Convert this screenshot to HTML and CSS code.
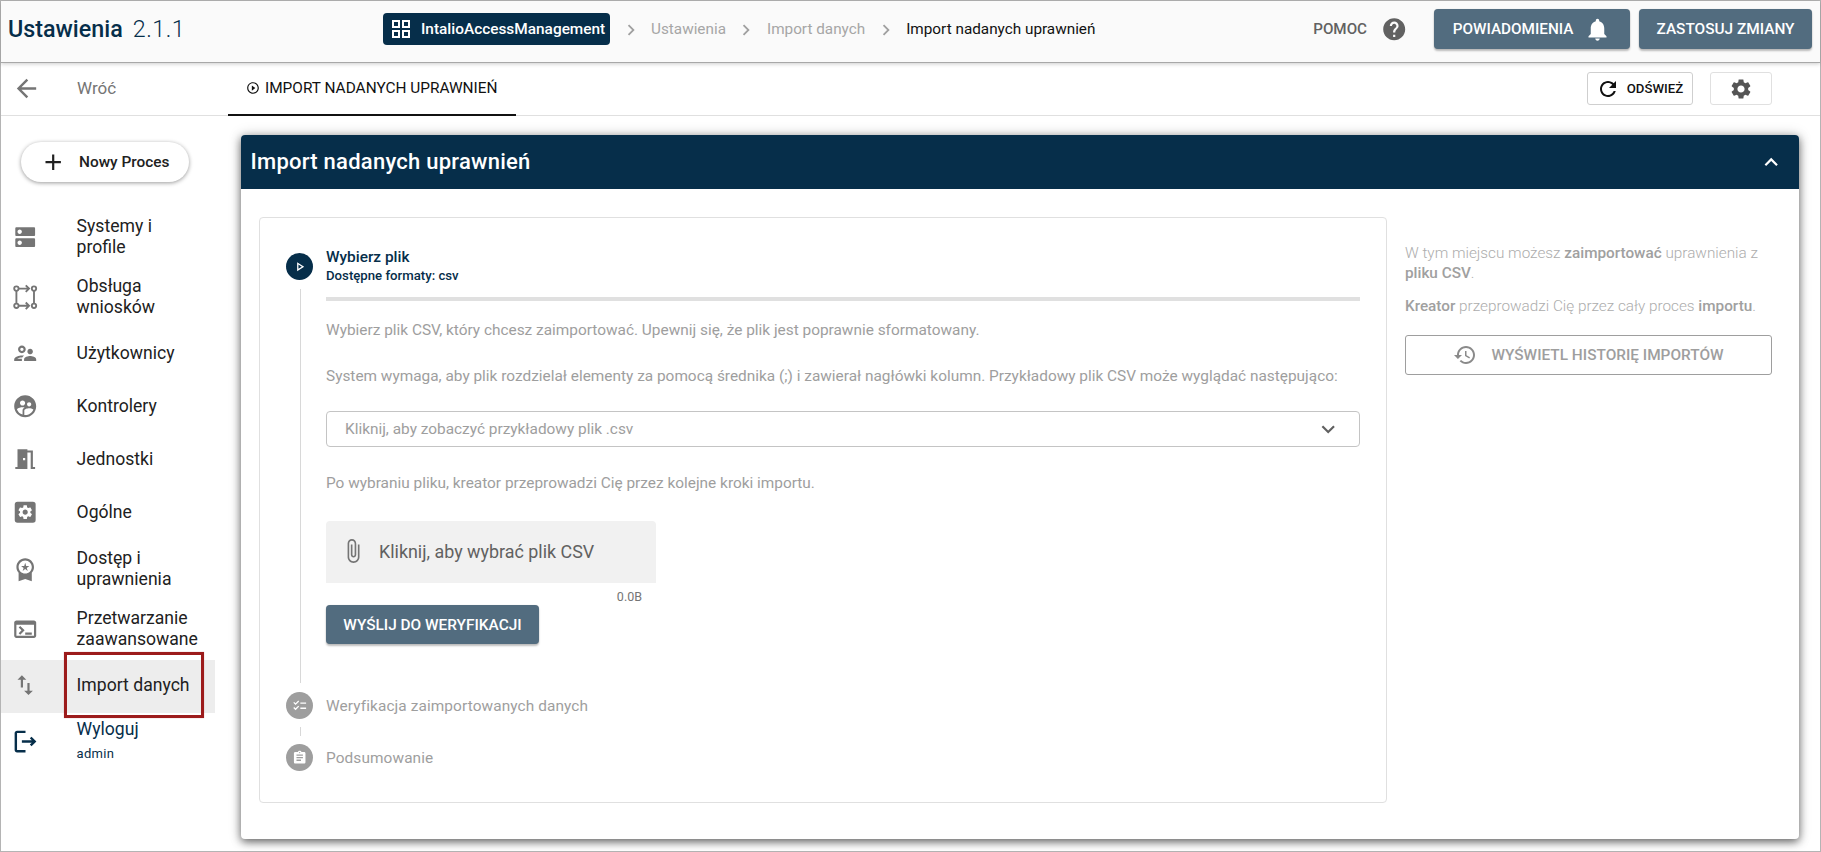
FILE: index.html
```html
<!DOCTYPE html>
<html lang="pl">
<head>
<meta charset="utf-8">
<title>Ustawienia</title>
<link rel="stylesheet" href="styles.css">
</head>
<body>
<svg class="defs" aria-hidden="true">
<defs>
<symbol id="i-grid" viewBox="0 0 24 24"><path d="M3 3v8h8V3H3zm6 6H5V5h4v4zm-6 4v8h8v-8H3zm6 6H5v-4h4v4zm4-16v8h8V3h-8zm6 6h-4V5h4v4zm-6 4v8h8v-8h-8zm6 6h-4v-4h4v4z"/></symbol>
<symbol id="i-next" viewBox="0 0 24 24"><path d="M10 6L8.59 7.41 13.17 12l-4.58 4.59L10 18l6-6z"/></symbol>
<symbol id="i-help" viewBox="0 0 24 24"><path d="M12 2C6.48 2 2 6.48 2 12s4.48 10 10 10 10-4.48 10-10S17.52 2 12 2zm1 17h-2v-2h2v2zm2.07-7.75l-.9.92C13.45 12.9 13 13.5 13 15h-2v-.5c0-1.1.45-2.1 1.17-2.83l1.24-1.26c.37-.36.59-.86.59-1.41 0-1.1-.9-2-2-2s-2 .9-2 2H8c0-2.21 1.79-4 4-4s4 1.79 4 4c0 .88-.36 1.68-.93 2.25z"/></symbol>
<symbol id="i-bell" viewBox="0 0 24 24"><path d="M12 22c1.1 0 2-.9 2-2h-4c0 1.1.89 2 2 2zm6-6v-5c0-3.07-1.64-5.64-4.5-6.32V4c0-.83-.67-1.5-1.5-1.5s-1.5.67-1.5 1.5v.68C7.63 5.36 6 7.92 6 11v5l-2 2v1h16v-1l-2-2z"/></symbol>
<symbol id="i-back" viewBox="0 0 24 24"><path d="M20 11H7.83l5.59-5.59L12 4l-8 8 8 8 1.41-1.41L7.83 13H20v-2z"/></symbol>
<symbol id="i-refresh" viewBox="0 0 24 24"><path d="M17.65 6.35C16.2 4.9 14.21 4 12 4c-4.42 0-7.99 3.58-7.99 8s3.57 8 7.99 8c3.73 0 6.84-2.55 7.73-6h-2.08c-.82 2.33-3.04 4-5.65 4-3.31 0-6-2.69-6-6s2.69-6 6-6c1.66 0 3.14.69 4.22 1.78L13 11h7V4l-2.35 2.35z"/></symbol>
<symbol id="i-gear" viewBox="0 0 24 24"><path d="M19.14 12.94c.04-.3.06-.61.06-.94 0-.32-.02-.64-.07-.94l2.03-1.58c.18-.14.23-.41.12-.61l-1.92-3.32c-.12-.22-.37-.29-.59-.22l-2.39.96c-.5-.38-1.03-.7-1.62-.94l-.36-2.54c-.04-.24-.24-.41-.48-.41h-3.84c-.24 0-.43.17-.47.41l-.36 2.54c-.59.24-1.13.57-1.62.94l-2.39-.96c-.22-.08-.47 0-.59.22L2.74 8.87c-.12.21-.08.47.12.61l2.03 1.58c-.05.3-.09.63-.09.94s.02.64.07.94l-2.03 1.58c-.18.14-.23.41-.12.61l1.92 3.32c.12.22.37.29.59.22l2.39-.96c.5.38 1.03.7 1.62.94l.36 2.54c.05.24.24.41.48.41h3.84c.24 0 .44-.17.47-.41l.36-2.54c.59-.24 1.13-.56 1.62-.94l2.39.96c.22.08.47 0 .59-.22l1.92-3.32c.12-.22.07-.47-.12-.61l-2.01-1.58zM12 15.6c-1.98 0-3.6-1.62-3.6-3.6s1.62-3.6 3.6-3.6 3.6 1.62 3.6 3.6-1.62 3.6-3.6 3.6z"/></symbol>
<symbol id="i-add" viewBox="0 0 24 24"><path d="M19 13h-6v6h-2v-6H5v-2h6V5h2v6h6v2z"/></symbol>
<symbol id="i-less" viewBox="0 0 24 24"><path d="M12 8l-6 6 1.41 1.41L12 10.83l4.59 4.58L18 14z"/></symbol>
<symbol id="i-more" viewBox="0 0 24 24"><path d="M16.59 8.59L12 13.17 7.41 8.59 6 10l6 6 6-6z"/></symbol>
<symbol id="i-dns" viewBox="0 0 24 24"><path d="M20 13H4c-.55 0-1 .45-1 1v6c0 .55.45 1 1 1h16c.55 0 1-.45 1-1v-6c0-.55-.45-1-1-1zM7 19c-1.1 0-2-.9-2-2s.9-2 2-2 2 .9 2 2-.9 2-2 2zM20 3H4c-.55 0-1 .45-1 1v6c0 .55.45 1 1 1h16c.55 0 1-.45 1-1V4c0-.55-.45-1-1-1zM7 9c-1.1 0-2-.9-2-2s.9-2 2-2 2 .9 2 2-.9 2-2 2z"/></symbol>
<symbol id="i-route" viewBox="0 0 24 24"><g fill="none" stroke="currentColor" stroke-width="1.7"><circle cx="4" cy="4.2" r="2"/><circle cx="20" cy="4.2" r="2"/><circle cx="4" cy="19.800" r="2"/><circle cx="20" cy="19.800" r="2"/><path d="M4 6.200V17.800M20 6.200V17.800M6 4.200h9.500M6 19.800h9.500M12.500 1.200l3 3-3 3M12.500 16.800l3 3-3 3"/></g></symbol>
<symbol id="i-users" viewBox="0 0 24 24"><path d="M9 12c1.93 0 3.5-1.57 3.5-3.5S10.93 5 9 5 5.5 6.57 5.5 8.5 7.07 12 9 12zm0-5c.83 0 1.5.67 1.5 1.5S9.83 10 9 10s-1.5-.67-1.5-1.5S8.17 7 9 7zm.05 10H4.77c.99-.5 2.7-1 4.23-1 .11 0 .23.01.34.01.34-.73.93-1.33 1.64-1.81-.73-.13-1.42-.2-1.98-.2-2.34 0-7 1.17-7 3.5V19h7v-1.5c0-.17.02-.34.05-.5zm7.45-2.5c-1.84 0-5.5 1.01-5.5 3V19h11v-1.5c0-1.99-3.66-3-5.5-3zm1.21-1.82c.76-.43 1.29-1.24 1.29-2.18C19 9.12 17.88 8 16.5 8S14 9.12 14 10.5c0 .94.53 1.75 1.29 2.18.36.2.77.32 1.21.32s.85-.12 1.21-.32z"/></symbol>
<symbol id="i-ctrl" viewBox="0 0 24 24"><path d="M11.99 2c-5.52 0-10 4.48-10 10s4.48 10 10 10 10-4.48 10-10-4.48-10-10-10zm3.61 6.34c1.07 0 1.93.86 1.93 1.93 0 1.07-.86 1.93-1.93 1.93-1.07 0-1.93-.86-1.93-1.93-.01-1.07.86-1.93 1.93-1.93zm-6-1.58c1.3 0 2.36 1.06 2.36 2.36 0 1.3-1.06 2.36-2.36 2.36s-2.36-1.06-2.36-2.36c0-1.31 1.05-2.36 2.36-2.36zm0 9.13v3.75c-2.4-.75-4.3-2.6-5.14-4.96 1.05-1.12 3.67-1.69 5.14-1.69.53 0 1.2.08 1.9.22-1.64.87-1.9 2.02-1.9 2.68zM11.99 20c-.27 0-.53-.01-.79-.04v-4.07c0-1.42 2.94-2.13 4.4-2.13 1.07 0 2.92.39 3.84 1.15-1.17 2.97-4.06 5.09-7.45 5.09z"/></symbol>
<symbol id="i-door" viewBox="0 0 24 24"><path d="M14 6v15H3v-2h2V3h9v1h5v15h2v2h-4V6h-3zm-4 5v2h2v-2h-2z"/></symbol>
<symbol id="i-app-gear" viewBox="0 0 24 24"><rect x="2.500" y="2.500" width="19" height="19" rx="2.500" fill="currentColor"/><g transform="translate(4.200 4.200) scale(.65)"><path fill="#fff" d="M19.14 12.94c.04-.3.06-.61.06-.94 0-.32-.02-.64-.07-.94l2.03-1.58c.18-.14.23-.41.12-.61l-1.92-3.32c-.12-.22-.37-.29-.59-.22l-2.39.96c-.5-.38-1.03-.7-1.62-.94l-.36-2.54c-.04-.24-.24-.41-.48-.41h-3.84c-.24 0-.43.17-.47.41l-.36 2.54c-.59.24-1.13.57-1.62.94l-2.39-.96c-.22-.08-.47 0-.59.22L2.74 8.87c-.12.21-.08.47.12.61l2.03 1.58c-.05.3-.09.63-.09.94s.02.64.07.94l-2.03 1.58c-.18.14-.23.41-.12.61l1.92 3.32c.12.22.37.29.59.22l2.39-.96c.5.38 1.03.7 1.62.94l.36 2.54c.05.24.24.41.48.41h3.84c.24 0 .44-.17.47-.41l.36-2.54c.59-.24 1.13-.56 1.62-.94l2.39.96c.22.08.47 0 .59-.22l1.92-3.32c.12-.22.07-.47-.12-.61l-2.01-1.58zM12 15.6c-1.98 0-3.6-1.62-3.6-3.6s1.62-3.6 3.6-3.6 3.6 1.62 3.6 3.6-1.62 3.6-3.6 3.6z"/></g></symbol>
<symbol id="i-award" viewBox="0 0 24 24"><path d="M9.68 13.69L12 11.93l2.31 1.76-.88-2.85L15.75 9h-2.84L12 6.19 11.09 9H8.25l2.31 1.84-.88 2.85zM20 10c0-4.42-3.58-8-8-8s-8 3.58-8 8c0 2.03.76 3.87 2 5.28V23l6-2 6 2v-7.72c1.24-1.41 2-3.25 2-5.28zm-8-6c3.31 0 6 2.69 6 6s-2.69 6-6 6-6-2.69-6-6 2.69-6 6-6z"/></symbol>
<symbol id="i-term" viewBox="0 0 24 24"><path d="M20 4H4c-1.1 0-2 .9-2 2v12c0 1.1.9 2 2 2h16c1.1 0 2-.9 2-2V6c0-1.1-.9-2-2-2zm0 14H4V8h16v10zm-2-1h-6v-2h6v2zM7.5 17l-1.41-1.41L8.67 13l-2.59-2.59L7.5 9l4 4-4 4z"/></symbol>
<symbol id="i-swap" viewBox="0 0 24 24"><path d="M16 17.01V10h-2v7.01h-3L15 21l4-3.99h-3zM9 3L5 6.99h3V14h2V6.99h3L9 3z"/></symbol>
<symbol id="i-logout" viewBox="0 0 24 24"><path d="M17 8l-1.41 1.41L17.17 11H9v2h8.170l-1.580 1.580L17 16l4-4-4-4zM5 5h7V3H5c-1.100 0-2 .900-2 2v14c0 1.100.900 2 2 2h7v-2H5V5z"/></symbol>
<symbol id="i-clip" viewBox="0 0 24 24"><path d="M16.500 6v11.500c0 2.210-1.790 4-4 4s-4-1.790-4-4V5c0-1.380 1.120-2.500 2.500-2.500s2.500 1.120 2.500 2.500v10.500c0 .550-.450 1-1 1s-1-.450-1-1V6H10v9.500c0 1.380 1.120 2.500 2.500 2.500s2.500-1.120 2.500-2.500V5c0-2.210-1.790-4-4-4S7 2.790 7 5v12.500c0 3.040 2.460 5.500 5.500 5.500s5.500-2.460 5.500-5.500V6h-1.500z"/></symbol>
<symbol id="i-history" viewBox="0 0 24 24"><path d="M13 3c-4.970 0-9 4.030-9 9H1l3.890 3.890.070.140L9 12H6c0-3.870 3.130-7 7-7s7 3.130 7 7-3.130 7-7 7c-1.930 0-3.680-.790-4.940-2.060l-1.420 1.420C8.270 19.990 10.510 21 13 21c4.970 0 9-4.030 9-9s-4.030-9-9-9zm-1 5v5l4.280 2.540.720-1.210-3.500-2.080V8H12z"/></symbol>
<symbol id="i-play-c" viewBox="0 0 24 24"><path d="M10 16.500l6-4.500-6-4.500v9zM12 2C6.480 2 2 6.480 2 12s4.480 10 10 10 10-4.480 10-10S17.520 2 12 2zm0 18c-4.410 0-8-3.590-8-8s3.590-8 8-8 8 3.590 8 8-3.590 8-8 8z"/></symbol>
<symbol id="i-play" viewBox="0 0 24 24"><path d="M10 8.640L15.270 12 10 15.360V8.640M8 5v14l11-7L8 5z"/></symbol>
<symbol id="i-check" viewBox="0 0 24 24"><path d="M22 7h-9v2h9V7zm0 8h-9v2h9v-2zM5.540 11L2 7.460l1.410-1.410 2.120 2.120 4.240-4.240 1.410 1.410L5.540 11zm0 8L2 15.460l1.410-1.410 2.120 2.120 4.240-4.240 1.410 1.410L5.540 19z"/></symbol>
<symbol id="i-assign" viewBox="0 0 24 24"><path d="M19 3h-4.180C14.400 1.840 13.300 1 12 1c-1.300 0-2.400.840-2.820 2H5c-1.100 0-2 .900-2 2v14c0 1.100.900 2 2 2h14c1.100 0 2-.900 2-2V5c0-1.100-.900-2-2-2zm-7 0c.550 0 1 .450 1 1s-.450 1-1 1-1-.450-1-1 .450-1 1-1zm2 14H7v-2h7v2zm3-4H7v-2h10v2zm0-4H7V7h10v2z"/></symbol>
</defs>
</svg>

<div class="app">
  <header class="topbar">
    <div class="brand"><strong>Ustawienia</strong><span class="version">2.1.1</span></div>
    <nav class="crumbs">
      <span class="chip"><svg class="ic ic-chip"><use href="#i-grid"/></svg>IntalioAccessManagement</span>
      <svg class="ic ic-sep"><use href="#i-next"/></svg>
      <span class="crumb">Ustawienia</span>
      <svg class="ic ic-sep"><use href="#i-next"/></svg>
      <span class="crumb">Import danych</span>
      <svg class="ic ic-sep"><use href="#i-next"/></svg>
      <span class="crumb crumb-current">Import nadanych uprawnień</span>
    </nav>
    <div class="top-actions">
      <span class="help-label">POMOC</span>
      <svg class="ic ic-help"><use href="#i-help"/></svg>
      <button class="btn btn-notify">POWIADOMIENIA<svg class="ic ic-bell"><use href="#i-bell"/></svg></button>
      <button class="btn btn-apply">ZASTOSUJ ZMIANY</button>
    </div>
  </header>

  <div class="subbar">
    <div class="back"><svg class="ic ic-back"><use href="#i-back"/></svg><span class="back-label">Wróć</span></div>
    <div class="tab"><svg class="ic ic-tab"><use href="#i-play-c"/></svg>IMPORT NADANYCH UPRAWNIEŃ</div>
    <div class="sub-actions">
      <button class="tool tool-refresh"><svg class="ic ic-refresh"><use href="#i-refresh"/></svg>ODŚWIEŻ</button>
      <button class="tool tool-gear"><svg class="ic ic-gear"><use href="#i-gear"/></svg></button>
    </div>
  </div>

  <div class="main">
    <aside class="sidebar">
      <button class="new-process"><svg class="ic ic-add"><use href="#i-add"/></svg>Nowy Proces</button>
      <ul class="menu">
        <li class="item item-two"><svg class="ic ic-menu"><use href="#i-dns"/></svg><span>Systemy i<br>profile</span></li>
        <li class="item item-two"><svg class="ic ic-menu"><use href="#i-route"/></svg><span>Obsługa<br>wniosków</span></li>
        <li class="item"><svg class="ic ic-menu"><use href="#i-users"/></svg><span>Użytkownicy</span></li>
        <li class="item"><svg class="ic ic-menu"><use href="#i-ctrl"/></svg><span>Kontrolery</span></li>
        <li class="item"><svg class="ic ic-menu"><use href="#i-door"/></svg><span>Jednostki</span></li>
        <li class="item"><svg class="ic ic-menu"><use href="#i-app-gear"/></svg><span>Ogólne</span></li>
        <li class="item item-two"><svg class="ic ic-menu"><use href="#i-award"/></svg><span>Dostęp i<br>uprawnienia</span></li>
        <li class="item item-two"><svg class="ic ic-menu"><use href="#i-term"/></svg><span>Przetwarzanie<br>zaawansowane</span></li>
        <li class="item item-active"><svg class="ic ic-menu"><use href="#i-swap"/></svg><span>Import danych</span><i class="highlight"></i></li>
        <li class="item item-logout"><svg class="ic ic-logout"><use href="#i-logout"/></svg><div class="logout-text"><span>Wyloguj</span><small>admin</small></div></li>
      </ul>
    </aside>

    <section class="panel">
      <div class="panel-head"><h1>Import nadanych uprawnień</h1><svg class="ic ic-less"><use href="#i-less"/></svg></div>
      <div class="panel-body">
        <div class="wizard">
          <div class="step step-active">
            <div class="rail">
              <span class="dot dot-on"><svg class="ic ic-dot"><use href="#i-play"/></svg></span>
              <span class="rail-line"></span>
            </div>
            <div class="step-content">
              <div class="step-title">Wybierz plik</div>
              <div class="step-sub">Dostępne formaty: csv</div>
              <div class="progress"></div>
              <p class="para para-1">Wybierz plik CSV, który chcesz zaimportować. Upewnij się, że plik jest poprawnie sformatowany.</p>
              <p class="para para-2">System wymaga, aby plik rozdzielał elementy za pomocą średnika (;) i zawierał nagłówki kolumn. Przykładowy plik CSV może wyglądać następująco:</p>
              <div class="select"><span>Kliknij, aby zobaczyć przykładowy plik .csv</span><svg class="ic ic-more"><use href="#i-more"/></svg></div>
              <p class="para para-3">Po wybraniu pliku, kreator przeprowadzi Cię przez kolejne kroki importu.</p>
              <div class="file"><svg class="ic ic-clip"><use href="#i-clip"/></svg>Kliknij, aby wybrać plik CSV</div>
              <div class="file-size">0.0B</div>
              <button class="btn btn-send">WYŚLIJ DO WERYFIKACJI</button>
            </div>
          </div>
          <div class="step step-idle">
            <span class="dot"><svg class="ic ic-dot-idle"><use href="#i-check"/></svg></span>
            <span class="step-label">Weryfikacja zaimportowanych danych</span>
          </div>
          <span class="connector"></span>
          <div class="step step-idle">
            <span class="dot"><svg class="ic ic-dot-idle"><use href="#i-assign"/></svg></span>
            <span class="step-label">Podsumowanie</span>
          </div>
        </div>
        <div class="side-info">
          <p class="info info-1">W tym miejscu możesz <b>zaimportować</b> uprawnienia z <b>pliku CSV</b>.</p>
          <p class="info info-2"><b>Kreator</b> przeprowadzi Cię przez cały proces <b>importu</b>.</p>
          <button class="history"><svg class="ic ic-history"><use href="#i-history"/></svg>WYŚWIETL HISTORIĘ IMPORTÓW</button>
        </div>
      </div>
    </section>
  </div>
</div>
</body>
</html>
```

FILE: styles.css
```css
* { box-sizing: border-box; }
html, body { margin: 0; padding: 0; }
body { width: 1821px; height: 852px; overflow: hidden; background: #fff; font-family: Roboto, "Noto Sans", sans-serif; color: #212121; }
.defs { position: absolute; width: 0; height: 0; }
.ic { display: block; flex: none; fill: currentColor; }
button { font-family: inherit; cursor: pointer; }
p, h1, ul { margin: 0; padding: 0; }

.app { width: 1821px; height: 852px; border: 1px solid #b4b4b4; display: flex; flex-direction: column; }

.topbar { height: 62px; flex: none; display: flex; align-items: center; background: #fafafa; border-bottom: 1px solid #a8a8a8; box-shadow: 0 1px 4px rgba(0,0,0,.2); padding: 0 8px 0 7px; position: relative; z-index: 2; }
.brand { width: 375px; color: #062e4a; font-size: 23.3px; display: flex; align-items: baseline; margin-top: -5px; }
.brand strong { font-weight: 500; }
.version { font-weight: 300; margin-left: 10px; letter-spacing: .5px; }
.crumbs { display: flex; align-items: center; margin-top: -5px; }
.chip { display: flex; align-items: center; height: 32px; width: 227px; background: #062e4a; color: #fff; border-radius: 4px; padding-left: 6px; font-size: 15.4px; font-weight: 500; white-space: nowrap; }
.ic-chip { width: 24px; height: 24px; margin-right: 8px; }
.ic-sep { width: 22px; height: 22px; color: #a0a0a0; margin: 2px 9.5px 0 9.5px; }
.crumb { color: #a6a6a6; font-size: 15.3px; }
.crumb-current { color: #111; }
.top-actions { margin-left: auto; display: flex; align-items: center; margin-top: -5px; }
.help-label { color: #616161; font-size: 15.2px; font-weight: 500; }
.ic-help { width: 26.4px; height: 26.4px; color: #616161; margin: 0 26.8px 0 13.8px; }
.btn { border: 0; border-radius: 4px; background: #526c7f; color: #fff; font-weight: 500; box-shadow: 0 2px 2px rgba(0,0,0,.25), 0 0 1px rgba(0,0,0,.2); display: flex; align-items: center; justify-content: center; white-space: nowrap; }
.btn-notify { width: 196px; height: 40px; font-size: 15.3px; margin-right: 9px; }
.ic-bell { width: 27px; height: 27px; margin-left: 11px; }
.btn-apply { width: 173px; height: 40px; font-size: 15.4px; }

.subbar { height: 53px; flex: none; display: flex; align-items: center; border-bottom: 1px solid #e0e0e0; position: relative; }
.back { width: 227px; display: flex; align-items: center; color: #757575; margin-top: -2px; }
.ic-back { width: 29px; height: 29px; margin-left: 10.5px; }
.back-label { font-size: 17px; margin-left: 36.5px; }
.tab { width: 288px; height: 52px; padding: 0 0 2px 18px; display: flex; align-items: center; border-bottom: 2px solid #111; font-size: 15.4px; color: #111; margin-bottom: -1px; white-space: nowrap; }
.ic-tab { width: 14px; height: 14px; margin-right: 5px; }
.sub-actions { margin-left: auto; display: flex; margin-right: 48px; gap: 17px; margin-top: -1px; }
.tool { height: 33px; background: #fff; border: 1px solid #cfcfcf; border-radius: 3px; display: flex; align-items: center; justify-content: center; color: #111; font-size: 13.2px; font-weight: 500; padding: 0 1px 0 0; }
.tool-refresh { width: 106px; }
.ic-refresh { width: 24px; height: 24px; margin-right: 7px; }
.tool-gear { width: 62px; border-color: #e0e0e0; }
.ic-gear { width: 24px; height: 24px; color: #555; }

.main { flex: 1; min-height: 0; display: flex; }
.sidebar { width: 214px; flex: none; padding-top: 26px; }
.new-process { display: flex; align-items: center; width: 168px; height: 40px; margin-left: 20px; border: 0; border-radius: 20px; background: #fff; box-shadow: 0 1px 4px rgba(0,0,0,.4); color: #212121; font-size: 15.4px; font-weight: 500; padding: 0 0 0 19px; }
.ic-add { width: 26.4px; height: 26.4px; margin-right: 12.6px; }
.menu { list-style: none; margin-top: 25px; }
.item { height: 53px; display: flex; align-items: center; font-size: 17.6px; line-height: 21px; color: #212121; position: relative; }
.item-two { height: 60px; }
.ic-menu { width: 26.4px; height: 26.4px; color: #757575; margin: 0 38.2px 0 11px; }
.item-active { height: 52.5px; background: #ededed; margin-top: 1px; padding-bottom: 2px; }
.highlight { position: absolute; left: 63px; top: -8px; width: 140px; height: 66px; border: 3px solid #9c1b1b; box-shadow: 0 0 1px rgba(156,27,27,.4); pointer-events: none; }
.item-logout { align-items: flex-start; padding-top: 6px; color: #062e4a; height: 60px; }
.ic-logout { width: 29px; height: 29px; color: #062e4a; margin: 8px 36.6px 0 10px; }
.logout-text { display: flex; flex-direction: column; }
.logout-text small { font-size: 13px; line-height: 20px; margin-top: 4px; letter-spacing: .3px; }

.panel { width: 1558px; height: 704px; margin: 19px 0 0 26px; border-radius: 4px; background: #fff; box-shadow: 0 3px 8px rgba(0,0,0,.55), 0 0 14px rgba(0,0,0,.18); display: flex; flex-direction: column; }
.panel-head { height: 54px; flex: none; background: #062e4a; color: #fff; border-radius: 4px 4px 0 0; display: flex; align-items: center; justify-content: space-between; padding: 0 15px 2px 9.5px; }
.panel-head h1 { font-size: 22px; font-weight: 500; letter-spacing: .25px; }
.ic-less { width: 26.4px; height: 26.4px; margin-top: 2px; }
.panel-body { flex: 1; display: flex; padding: 28px 0 0 18px; }
.wizard { width: 1128px; height: 586px; border: 1px solid #e0e0e0; border-radius: 4px; padding: 35px 26px 0 26px; display: flex; flex-direction: column; }
.step { display: flex; }
.step-active { height: 430px; margin-bottom: 9px; gap: 13px; }
.rail { width: 27px; flex: none; display: flex; flex-direction: column; align-items: center; }
.dot { width: 27px; height: 27px; flex: none; border-radius: 50%; background: #9e9e9e; color: #fff; display: flex; align-items: center; justify-content: center; }
.dot-on { background: #062e4a; }
.ic-dot { width: 15.4px; height: 15.4px; }
.ic-dot-idle { width: 15.4px; height: 15.4px; }
.rail-line { width: 1px; flex: 1; background: #d8d8d8; margin: 9px 0 0 1px; }
.step-content { flex: 1; margin-top: -6px; }
.step-title { color: #062e4a; font-size: 15.4px; font-weight: 500; line-height: 20px; }
.step-sub { color: #062e4a; font-size: 13.2px; font-weight: 500; line-height: 17px; margin-bottom: 13px; }
.progress { height: 4px; background: #e0e0e0; }
.para { color: #9e9e9e; font-size: 15.4px; line-height: 20px; white-space: nowrap; }
.para-1 { margin-top: 19px; }
.para-2 { margin-top: 26px; }
.para-3 { margin-top: 26px; }
.select { height: 36px; margin-top: 25px; border: 1px solid #c4c4c4; border-radius: 4px; display: flex; align-items: center; justify-content: space-between; padding: 0 18px; color: #9e9e9e; font-size: 15.4px; }
.ic-more { width: 26.4px; height: 26.4px; color: #616161; }
.file { width: 330px; height: 62px; margin-top: 28px; padding: 0 0 2px 14px; background: #f1f1f1; border-radius: 4px 4px 0 0; display: flex; align-items: center; color: #616161; font-size: 17.9px; }
.ic-clip { width: 26px; height: 26px; margin-right: 13px; color: #757575; }
.file-size { width: 316px; text-align: right; color: #757575; font-size: 12.5px; line-height: 16px; margin-top: 6px; }
.btn-send { width: 213px; height: 39px; font-size: 15.4px; }
.step-idle { align-items: center; gap: 13px; }
.step-label { color: #9e9e9e; font-size: 15.4px; letter-spacing: .1px; }
.connector { width: 1px; height: 9px; background: #d8d8d8; margin: 8px 0 8px 14px; flex: none; }
.side-info { width: 367px; margin-left: 18px; padding-top: 26px; color: #adadad; font-size: 15.3px; font-weight: 300; line-height: 20px; }
.side-info b { font-weight: 500; color: #a0a0a0; }
.info-2 { margin-top: 13px; }
.history { width: 367px; height: 40px; margin-top: 19px; background: #fff; border: 1px solid #9e9e9e; border-radius: 3px; color: #9e9e9e; font-size: 15.4px; font-weight: 500; display: flex; align-items: center; justify-content: center; padding: 0; }
.ic-history { width: 24px; height: 24px; margin-right: 14px; color: #8a8a8a; }
```
